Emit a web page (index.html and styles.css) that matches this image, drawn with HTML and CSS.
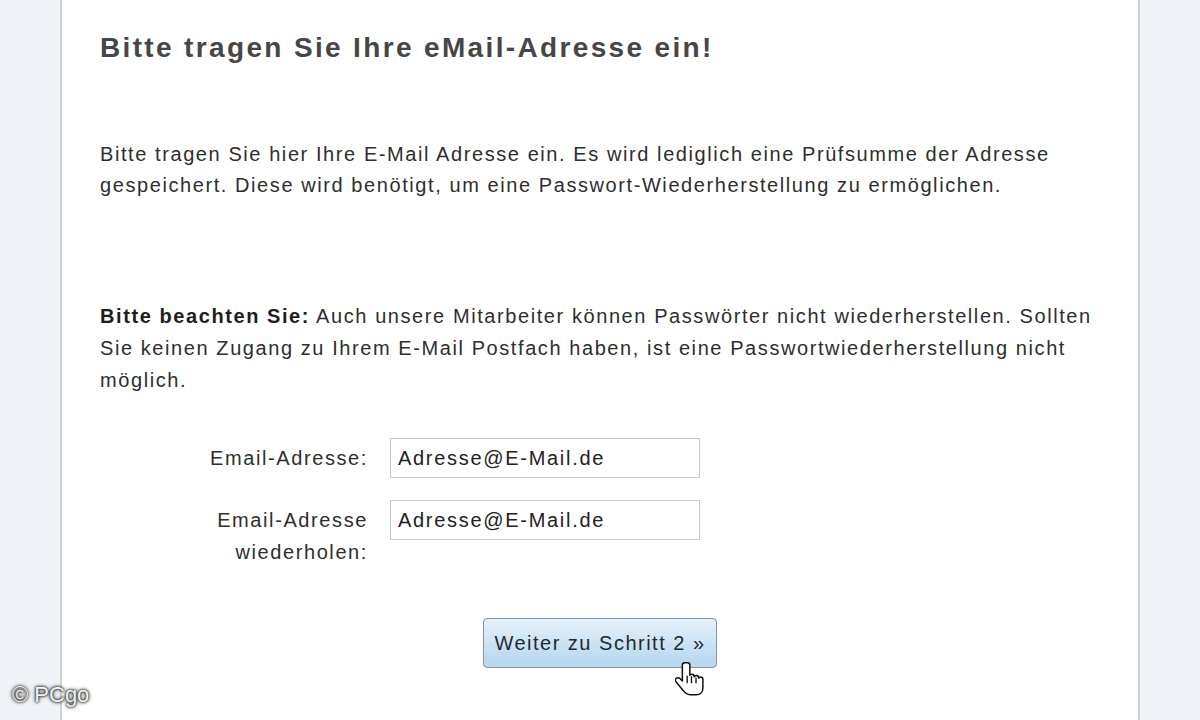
FILE: index.html
```html
<!DOCTYPE html>
<html lang="de">
<head>
<meta charset="utf-8">
<title>eMail-Adresse</title>
<link rel="stylesheet" href="styles.css">
</head>
<body>
<div class="page">
  <main class="panel">
    <h1 class="title">Bitte tragen Sie Ihre eMail-Adresse ein!</h1>
    <p class="para para-intro">Bitte tragen Sie hier Ihre E-Mail Adresse ein. Es wird lediglich eine Prüfsumme der Adresse gespeichert. Diese wird benötigt, um eine Passwort-Wiederherstellung zu ermöglichen.</p>
    <p class="para para-note"><strong>Bitte beachten Sie:</strong> Auch unsere Mitarbeiter können Passwörter nicht wiederherstellen. Sollten Sie keinen Zugang zu Ihrem E-Mail Postfach haben, ist eine Passwortwiederherstellung nicht möglich.</p>
    <form class="form">
      <label class="label" for="m1">Email-Adresse:</label>
      <input class="field" id="m1" type="text" value="Adresse@E-Mail.de">
      <label class="label" for="m2">Email-Adresse<br>wiederholen:</label>
      <input class="field" id="m2" type="text" value="Adresse@E-Mail.de">
      <div class="actions">
        <button class="btn" type="button">Weiter zu Schritt 2 »</button>
        <svg class="cursor" width="30" height="36" viewBox="0 0 20 24">
          <path d="M6.5 1.2c-1 0-1.6.7-1.6 1.6v10.6l-1.6-1.7c-.8-.8-2-.8-2.6 0-.6.6-.5 1.6.1 2.3l4.6 5.6c1 1.3 2.4 2.9 4.6 2.9h4.2c2.8 0 4.4-2 4.4-4.7v-5.6c0-.9-.7-1.6-1.5-1.6-.6 0-1.1.3-1.3.8v-.2c0-.9-.7-1.6-1.6-1.6-.6 0-1.1.3-1.4.9 0-.9-.7-1.6-1.6-1.6-.6 0-1 .3-1.3.7V2.8c0-.9-.6-1.6-1.4-1.6z" fill="#fff" stroke="#111" stroke-width="1" stroke-linejoin="round"/>
          <path d="M8.1 9.8v5M11 10.2v4.6M14 11v3.8" stroke="#111" stroke-width="0.9" fill="none"/>
        </svg>
      </div>
    </form>
  </main>
</div>
<div class="watermark">© PCgo</div>
</body>
</html>
```

FILE: styles.css
```css
html, body {
  margin: 0;
  padding: 0;
}
body {
  width: 1200px;
  height: 720px;
  overflow: hidden;
  background: #eff2f6;
  font-family: "Liberation Sans", Arial, sans-serif;
  color: #2e2e2e;
}
.page {
  display: flex;
  height: 720px;
  padding-left: 60px;
}
.panel {
  width: 1080px;
  box-sizing: border-box;
  background: #fff;
  border-left: 2px solid #d2d3d5;
  border-right: 2px solid #d2d3d5;
  padding: 28px 0 0 38px;
}
.title {
  margin: 0;
  font-size: 28px;
  font-weight: bold;
  letter-spacing: 2.35px;
  color: #474646;
  line-height: 40px;
}
.para {
  margin: 0;
  font-size: 20px;
  letter-spacing: 1.58px;
  line-height: 31px;
  width: 1005px;
}
.para-intro {
  margin-top: 71px;
}
.para-note {
  margin-top: 99px;
  line-height: 32px;
}
.para-note strong {
  color: #1e1e1e;
}
.form {
  display: grid;
  grid-template-columns: 268px 310px;
  column-gap: 22px;
  row-gap: 22px;
  margin-top: 42px;
  align-items: start;
}
.label {
  text-align: right;
  font-size: 20px;
  letter-spacing: 1.6px;
  line-height: 32px;
  color: #2e2e2e;
  padding-top: 4px;
}
.field {
  width: 310px;
  height: 40px;
  box-sizing: border-box;
  border: 1px solid #c9c9c9;
  padding: 0 7px;
  font-family: "Liberation Sans", Arial, sans-serif;
  font-size: 20px;
  letter-spacing: 1.7px;
  color: #222;
  background: #fff;
  outline: none;
}
.actions {
  grid-column: 1 / -1;
  position: relative;
  display: flex;
  justify-content: center;
  margin-top: 28px;
  margin-left: -38px;
  width: 1076px;
}
.btn {
  height: 50px;
  padding: 0 10px;
  font-family: "Liberation Sans", Arial, sans-serif;
  font-size: 20px;
  letter-spacing: 1.5px;
  color: #1e2a30;
  border: 1.5px solid #7e95a8;
  border-radius: 4px;
  background: linear-gradient(#e6f2fa, #c9e2f3 55%, #b4d6ee);
}
.cursor {
  position: absolute;
  left: 613px;
  top: 43px;
}
.watermark {
  position: absolute;
  left: 12px;
  top: 682px;
  font-family: "Liberation Sans", Arial, sans-serif;
  font-size: 22px;
  color: #f2f2f2;
  text-shadow: 0 0 2px #222, 0 0 3px #333, 0 0 4px #555;
}
```
